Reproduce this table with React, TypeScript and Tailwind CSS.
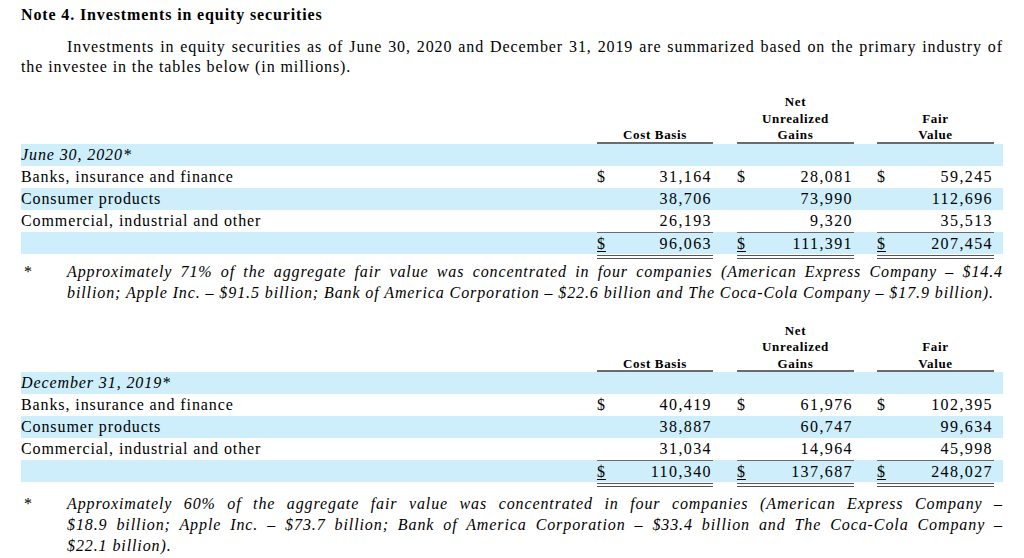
import React from "react";

type Row = {
  label: string;
  vals: [string, string, string];
  dollar?: boolean;
  italic?: boolean;
  blue?: boolean;
  total?: boolean;
  empty?: boolean;
};

const grid = "grid grid-cols-[576px_116px_24px_117px_23px_117px_9px]";

const Header = () => (
  <div className={`${grid} text-[13px] font-bold leading-[16.5px] tracking-[0.65px]`}>
    <div />
    <div className="flex items-end justify-center border-b-2 border-[#6b6b6b]">
      <span className="translate-y-[2px]">Cost Basis</span>
    </div>
    <div />
    <div className="flex items-end justify-center border-b-2 border-[#6b6b6b]">
      <div className="flex translate-y-[2px] flex-col items-center">
        <span>Net</span>
        <span>Unrealized</span>
        <span>Gains</span>
      </div>
    </div>
    <div />
    <div className="flex items-end justify-center border-b-2 border-[#6b6b6b]">
      <div className="flex translate-y-[2px] flex-col items-center">
        <span>Fair</span>
        <span>Value</span>
      </div>
    </div>
    <div />
  </div>
);

const Cell = ({ v, dollar, total }: { v: string; dollar?: boolean; total?: boolean }) => (
  <div
    className={`flex h-[22px] items-center justify-between pr-[1px] ${
      total ? "box-content border-t border-b-4 border-double border-t-[#6b6b6b] border-b-[#555]" : ""
    }`}
  >
    <span className={total ? "underline underline-offset-2" : ""}>{dollar ? "$" : ""}</span>
    <span className="tracking-[1.4px]">{v}</span>
  </div>
);

const Table = ({ rows }: { rows: Row[] }) => (
  <div>
    <Header />
    {rows.map((r, i) => (
      <div
        key={i}
        className={`${grid} ${
          r.total
            ? "h-[27px] items-start bg-[linear-gradient(to_bottom,#cdeefa_22px,transparent_22px)]"
            : r.blue
            ? "h-[22px] bg-[#cdeefa]"
            : "h-[22px]"
        }`}
      >
        <div className={`flex h-[22px] items-center ${r.italic ? "italic" : ""}`}>{r.label}</div>
        {r.empty ? (
          <>
            <div />
            <div />
            <div />
            <div />
            <div />
          </>
        ) : (
          <>
            <Cell v={r.vals[0]} dollar={r.dollar} total={r.total} />
            <div />
            <Cell v={r.vals[1]} dollar={r.dollar} total={r.total} />
            <div />
            <Cell v={r.vals[2]} dollar={r.dollar} total={r.total} />
          </>
        )}
        <div />
      </div>
    ))}
  </div>
);

const JLine = ({ children, last }: { children: React.ReactNode; last?: boolean }) => (
  <div className={last ? "whitespace-nowrap" : "whitespace-nowrap text-justify [text-align-last:justify]"}>{children}</div>
);

const Footnote = ({ lines }: { lines: string[] }) => (
  <div className="flex leading-[21px]">
    <div className="w-[46px] pl-[3px] not-italic">*</div>
    <div className="flex-1 italic">
      {lines.map((l, i) => (
        <JLine key={i} last={i === lines.length - 1}>
          {l}
        </JLine>
      ))}
    </div>
  </div>
);

export default function App() {
  const t1: Row[] = [
    { label: "June 30, 2020*", vals: ["", "", ""], italic: true, blue: true, empty: true },
    { label: "Banks, insurance and finance", vals: ["31,164", "28,081", "59,245"], dollar: true },
    { label: "Consumer products", vals: ["38,706", "73,990", "112,696"], blue: true },
    { label: "Commercial, industrial and other", vals: ["26,193", "9,320", "35,513"] },
    { label: "", vals: ["96,063", "111,391", "207,454"], dollar: true, blue: true, total: true },
  ];
  const t2: Row[] = [
    { label: "December 31, 2019*", vals: ["", "", ""], italic: true, blue: true, empty: true },
    { label: "Banks, insurance and finance", vals: ["40,419", "61,976", "102,395"], dollar: true },
    { label: "Consumer products", vals: ["38,887", "60,747", "99,634"], blue: true },
    { label: "Commercial, industrial and other", vals: ["31,034", "14,964", "45,998"] },
    { label: "", vals: ["110,340", "137,687", "248,027"], dollar: true, blue: true, total: true },
  ];

  return (
    <div className="h-[558px] w-[1024px] overflow-hidden bg-white px-[21px] pt-[5px] text-[16px] tracking-[0.9px] text-black [font-family:'Liberation_Serif',serif]">
      <div className="text-[16px] font-bold leading-[20px] tracking-[0.875px]">Note 4. Investments in equity securities</div>
      <div className="mt-[12px] leading-[20px]">
        <div className="whitespace-nowrap pl-[46px] text-justify [text-align-last:justify]">
          Investments in equity securities as of June 30, 2020 and December 31, 2019 are summarized based on the primary industry of
        </div>
        <div>the investee in the tables below (in millions).</div>
      </div>

      <div className="mt-[15px]">
        <Table rows={t1} />
      </div>
      <div className="mt-[2px]">
        <Footnote
          lines={[
            "Approximately 71% of the aggregate fair value was concentrated in four companies (American Express Company – $14.4",
            "billion; Apple Inc. – $91.5 billion; Bank of America Corporation – $22.6 billion and The Coca-Cola Company – $17.9 billion).",
          ]}
        />
      </div>

      <div className="mt-[18px]">
        <Table rows={t2} />
      </div>
      <div className="mt-[6px]">
        <Footnote
          lines={[
            "Approximately 60% of the aggregate fair value was concentrated in four companies (American Express Company –",
            "$18.9 billion; Apple Inc. – $73.7 billion; Bank of America Corporation – $33.4 billion and The Coca-Cola Company –",
            "$22.1 billion).",
          ]}
        />
      </div>
    </div>
  );
}
